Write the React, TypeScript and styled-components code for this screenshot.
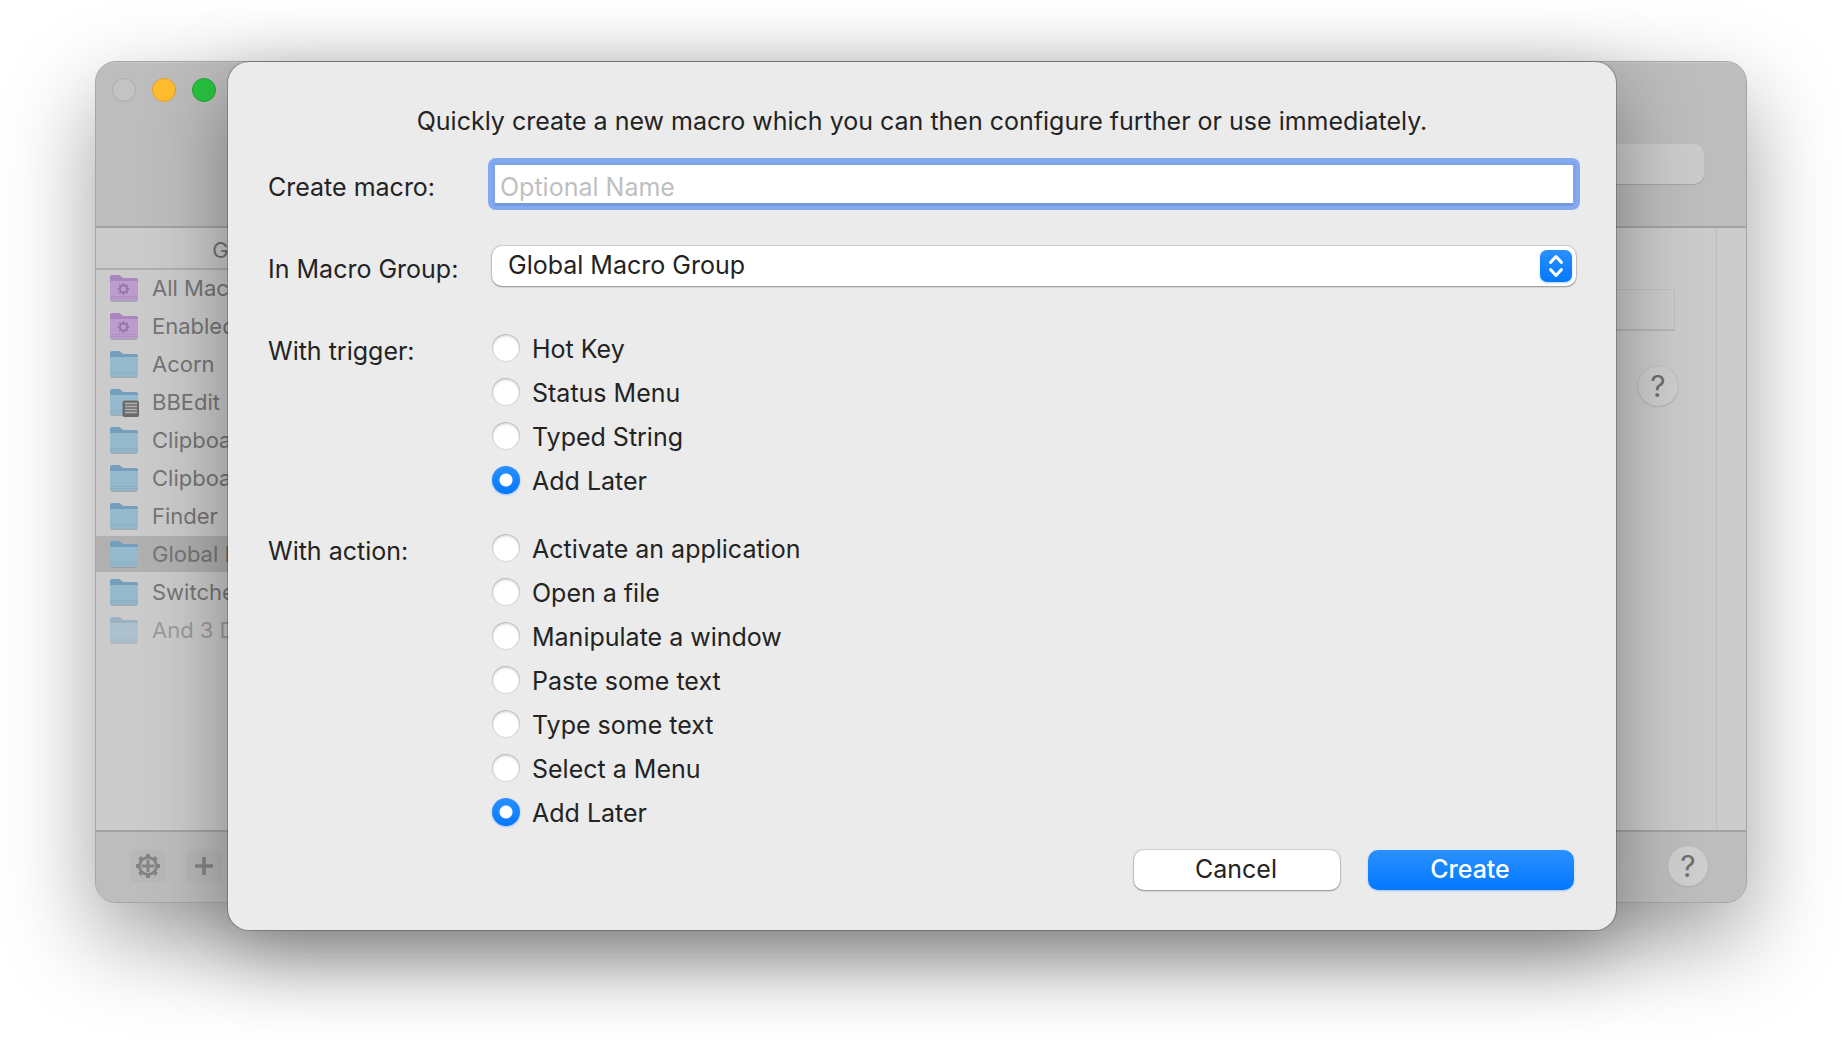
import React, { useState } from "react";
import styled, { createGlobalStyle } from "styled-components";

const GlobalStyle = createGlobalStyle`
  * { box-sizing: border-box; }
  html { background: #fff; }
  body {
    margin: 0;
    font-family: Inter, "Liberation Sans", sans-serif;
    color: #232323;
  }
  button, input, select { font: inherit; color: inherit; margin: 0; }
`;

const Stage = styled.main`
  display: grid;
  align-content: start;
  min-height: 100vh;
  padding: 61px 95px;
  overflow: hidden;
`;

const AppWindow = styled.section`
  grid-area: 1 / 1;
  display: flex;
  flex-direction: column;
  margin-bottom: 27px;
  border: 1px solid #a6a6a6;
  border-radius: 21px;
  background: #cbcbcb;
  overflow: hidden;
  box-shadow: 0 36px 90px rgba(0, 0, 0, 0.38);
`;

const Toolbar = styled.header`
  display: flex;
  justify-content: space-between;
  align-items: flex-start;
  height: 166px;
  padding: 16px 42px 0 16px;
  border-bottom: 2px solid #a3a3a3;
  background: #bdbdbd;
  box-shadow: inset 0 1px #c9c9c9;
`;

const Lights = styled.div`
  display: flex;
  gap: 16px;
`;

const Light = styled.button<{ $fill: string; $edge: string }>`
  width: 24px;
  height: 24px;
  padding: 0;
  border: 1px solid ${(p) => p.$edge};
  border-radius: 50%;
  background: ${(p) => p.$fill};
`;

const Search = styled.input`
  width: 300px;
  height: 40px;
  margin-top: 66px;
  border: 0;
  border-radius: 10px;
  background: #cbcbcb;
  box-shadow: 0 1px 1px #a2a2a2;
`;

const Body = styled.div`
  display: flex;
  flex: 1;
`;

const Sidebar = styled.nav`
  width: 308px;
`;

const SidebarTitle = styled.h2`
  margin: 0;
  height: 42px;
  border-bottom: 2px solid #b0b0b0;
  font-size: 22px;
  line-height: 44px;
  font-weight: 400;
  text-align: center;
  color: #737373;
`;

const GroupList = styled.ul`
  display: grid;
  gap: 2px;
  margin: 0;
  padding: 0;
  list-style: none;
`;

const GroupRow = styled.li<{ $selected?: boolean; $faded?: boolean }>`
  display: flex;
  align-items: center;
  gap: 13px;
  height: 36px;
  padding-left: 14px;
  background: ${(p) => (p.$selected ? "#b0b0b0" : "transparent")};
  font-size: 22px;
  white-space: nowrap;
  color: #757575;
  > * { opacity: ${(p) => (p.$faded ? 0.55 : 1)}; }
`;

const Editor = styled.div`
  display: flex;
  flex-direction: column;
  align-items: flex-end;
  flex: 1;
  padding: 61px 38px 0 0;
  gap: 35px;
`;

const NameField = styled.input`
  width: 300px;
  height: 42px;
  margin-right: 3px;
  border: 1px solid #bfbfbf;
  border-bottom: 2px solid #b6b6b6;
  background: transparent;
`;

const Gutter = styled.aside`
  width: 30px;
  border-left: 1px solid #bebebe;
`;

const Footer = styled.footer`
  display: flex;
  align-items: center;
  gap: 20px;
  height: 72px;
  padding: 0 38px 2px 34px;
  border-top: 2px solid #a3a3a3;
  background: #bdbdbd;
`;

const ToolButton = styled.button`
  display: grid;
  place-items: center;
  width: 36px;
  height: 34px;
  padding: 0;
  border: 0;
  border-radius: 8px;
  background: #b8b8b8;
  color: #858585;
`;

const HelpButton = styled.button<{ $push?: boolean }>`
  width: 40px;
  height: 40px;
  margin-left: ${(p) => (p.$push ? "auto" : "0")};
  padding: 0;
  border: 0;
  border-radius: 50%;
  background: #cecece;
  box-shadow: 0 0 1px #a8a8a8, 0 1px 2px #b0b0b0;
  font-size: 30px;
  line-height: 40px;
  color: #6e6e6e;
`;

const Sheet = styled.form`
  grid-area: 1 / 1;
  align-self: start;
  position: relative;
  margin: 1px 131px 0 133px;
  padding: 43px 40px 40px;
  border-radius: 21px;
  background: #ebebeb;
  box-shadow: 0 0 0 1px rgba(0, 0, 0, 0.22), 0 24px 80px rgba(0, 0, 0, 0.36);
  font-size: 25px;
  line-height: 32px;
`;

const Intro = styled.p`
  margin: 0 0 25px;
  text-align: center;
`;

const Field = styled.div`
  display: grid;
  grid-template-columns: 224px 1fr;
  align-items: center;
  margin-bottom: 38px;
`;

const FieldLabel = styled.label`
  height: 44px;
  padding-top: 6px;
  line-height: 38px;
`;

const NameInput = styled.input`
  width: 100%;
  height: 44px;
  padding: 5px 5px 0;
  border: 3px solid #7fa4ee;
  border-bottom-color: #7399e2;
  border-radius: 4px;
  outline: none;
  background: #fff;
  box-shadow: 0 0 0 4px #84a9f3;
  &::placeholder { color: #bfbfbf; opacity: 1; }
`;

const SelectBox = styled.div`
  position: relative;
`;

const GroupSelect = styled.select`
  display: block;
  width: 100%;
  height: 40px;
  padding: 0 60px 2px 16px;
  border: 0;
  border-radius: 10px;
  appearance: none;
  background: #fff;
  box-shadow: 0 0 1px 1px rgba(0, 0, 0, 0.12), 0 1px 2px rgba(0, 0, 0, 0.3);
`;

const Stepper = styled.span`
  position: absolute;
  top: 4px;
  right: 4px;
  display: grid;
  width: 32px;
  height: 32px;
  border-radius: 7px;
  background: linear-gradient(#2a90ff, #0378ff);
  box-shadow: 0 1px 2px rgba(0, 110, 255, 0.3);
  pointer-events: none;
`;

const Choices = styled.fieldset<{ $gap: number }>`
  display: grid;
  grid-template-columns: 224px 1fr;
  margin: 0 0 ${(p) => p.$gap}px;
  padding: 0;
  border: 0;
`;

const ChoicesLegend = styled.legend`
  float: left;
  height: 44px;
  padding: 6px 0 0;
  line-height: 38px;
`;

const Options = styled.div`
  display: grid;
  justify-items: start;
`;

const Option = styled.label`
  display: flex;
  align-items: center;
  gap: 12px;
  height: 44px;
`;

const OptionText = styled.span`
  padding-top: 2px;
`;

const Radio = styled.input`
  width: 28px;
  height: 28px;
  border-radius: 50%;
  appearance: none;
  background: #fff;
  box-shadow: inset 0 0 1px 1px rgba(0, 0, 0, 0.16), inset 0 2px 3px rgba(0, 0, 0, 0.16);
  &:checked {
    background: radial-gradient(circle, #fff 0 6px, transparent 7px),
      linear-gradient(#2a90ff, #0378ff);
    box-shadow: 0 1px 2px rgba(0, 110, 255, 0.35);
  }
`;

const Actions = styled.div`
  display: flex;
  justify-content: flex-end;
  gap: 28px;
  padding-right: 2px;
`;

const PushButton = styled.button<{ $primary?: boolean }>`
  width: 206px;
  height: 40px;
  padding: 0 2px 2px 0;
  border: 0;
  border-radius: 10px;
  background: ${(p) => (p.$primary ? "linear-gradient(#2a90ff, #0378ff)" : "#fff")};
  color: ${(p) => (p.$primary ? "#fff" : "#232323")};
  font-weight: ${(p) => (p.$primary ? 500 : 400)};
  box-shadow: ${(p) =>
    p.$primary
      ? "0 1px 2px rgba(0, 110, 255, 0.3)"
      : "0 0 1px 1px rgba(0, 0, 0, 0.12), 0 1px 2px rgba(0, 0, 0, 0.3)"};
`;

type FolderKind = "smart" | "plain" | "app";

function FolderIcon({ kind }: { kind: FolderKind }) {
  const smart = kind === "smart";
  const back = smart ? "#a986bb" : "#769fbe";
  const front = smart ? "#bc9bcd" : "#95b9cd";
  const line = smart ? "#aa8abd" : "#86a9bd";
  return (
    <svg width="29" height="29" viewBox="0 0 29 29" aria-hidden="true">
      <path d="M0 3Q0 1 2 1H8.500Q10 1 11 2.200Q12.500 4 14 4H26.500Q28 4 28 5.500V12H0Z" fill={back} />
      <path d="M0 7H28V25.500Q28 27 26.500 27H1.500Q0 27 0 25.500Z" fill={front} />
      <path d="M0 22.500H28M0 24.500H28" stroke={line} strokeWidth="0.7" />
      <path d="M1 27.300H27" stroke="#8e9599" strokeWidth="0.8" />
      {smart && (
        <g stroke="#9873ae" fill="none">
          <circle cx="13.500" cy="15" r="3.600" strokeWidth="1.800" />
          <g strokeWidth="1.700">
            <path d="M13.500 9V11.300M13.500 18.700V21M7.500 15H9.800M17.200 15H19.500" />
            <path d="M9.300 10.800L10.900 12.400M16.100 17.600L17.700 19.200M17.700 10.800L16.100 12.400M10.900 17.600L9.300 19.200" />
          </g>
        </g>
      )}
      {kind === "app" && (
        <g>
          <rect x="12.500" y="12.500" width="16.500" height="16.500" rx="2" fill="#6a6a6a" />
          <path d="M15 15.500H27M15 18.500H27M15 21.500H27M15 24.500H27" stroke="#b2b2b2" strokeWidth="1.500" />
        </g>
      )}
    </svg>
  );
}

const groups: { name: string; kind: FolderKind; selected?: boolean; faded?: boolean }[] = [
  { name: "All Macros", kind: "smart" },
  { name: "Enabled", kind: "smart" },
  { name: "Acorn", kind: "plain" },
  { name: "BBEdit", kind: "app" },
  { name: "Clipboard", kind: "plain" },
  { name: "Clipboard", kind: "plain" },
  { name: "Finder", kind: "plain" },
  { name: "Global M", kind: "plain", selected: true },
  { name: "Switcher", kind: "plain" },
  { name: "And 3 Dis", kind: "plain", faded: true },
];

const triggers = ["Hot Key", "Status Menu", "Typed String", "Add Later"];
const actions = [
  "Activate an application",
  "Open a file",
  "Manipulate a window",
  "Paste some text",
  "Type some text",
  "Select a Menu",
  "Add Later",
];

function RadioGroup(props: { legend: string; name: string; options: string[]; gap: number }) {
  const [value, setValue] = useState("Add Later");
  return (
    <Choices $gap={props.gap}>
      <ChoicesLegend>{props.legend}</ChoicesLegend>
      <Options>
        {props.options.map((option) => (
          <Option key={option}>
            <Radio
              type="radio"
              name={props.name}
              checked={value === option}
              onChange={() => setValue(option)}
            />
            <OptionText>{option}</OptionText>
          </Option>
        ))}
      </Options>
    </Choices>
  );
}

export default function App() {
  return (
    <>
      <GlobalStyle />
      <Stage>
        <AppWindow>
          <Toolbar>
            <Lights>
              <Light type="button" aria-label="Close" $fill="#c3c3c3" $edge="#acacac" />
              <Light type="button" aria-label="Minimize" $fill="#ffbd2e" $edge="#e0a028" />
              <Light type="button" aria-label="Zoom" $fill="#28c540" $edge="#22a935" />
            </Lights>
            <Search type="search" aria-label="Search" />
          </Toolbar>
          <Body>
            <Sidebar>
              <SidebarTitle>Groups</SidebarTitle>
              <GroupList>
                {groups.map((group, index) => (
                  <GroupRow key={index} $selected={group.selected} $faded={group.faded}>
                    <FolderIcon kind={group.kind} />
                    <span>{group.name}</span>
                  </GroupRow>
                ))}
              </GroupList>
            </Sidebar>
            <Editor>
              <NameField type="text" aria-label="Group name" />
              <HelpButton type="button">?</HelpButton>
            </Editor>
            <Gutter />
          </Body>
          <Footer>
            <ToolButton type="button" aria-label="Options">
              <svg width="26" height="26" viewBox="0 0 26 26" fill="none" stroke="currentColor">
                <circle cx="13" cy="13" r="8.500" strokeWidth="3" />
                <path d="M13 7V19M7 13H19" strokeWidth="3" />
                <path
                  d="M13 1V4M13 22V25M1 13H4M22 13H25M4.500 4.500L6.600 6.600M19.400 19.400L21.500 21.500M21.500 4.500L19.400 6.600M6.600 19.400L4.500 21.500"
                  strokeWidth="4"
                />
              </svg>
            </ToolButton>
            <ToolButton type="button" aria-label="Add">
              <svg width="20" height="20" viewBox="0 0 20 20" stroke="currentColor">
                <path d="M10 1V19M1 10H19" strokeWidth="3.600" />
              </svg>
            </ToolButton>
            <HelpButton type="button" $push>
              ?
            </HelpButton>
          </Footer>
        </AppWindow>

        <Sheet onSubmit={(event) => event.preventDefault()}>
          <Intro>Quickly create a new macro which you can then configure further or use immediately.</Intro>
          <Field>
            <FieldLabel htmlFor="macro-name">Create macro:</FieldLabel>
            <NameInput id="macro-name" type="text" placeholder="Optional Name" />
          </Field>
          <Field>
            <FieldLabel htmlFor="macro-group">In Macro Group:</FieldLabel>
            <SelectBox>
              <GroupSelect id="macro-group">
                <option>Global Macro Group</option>
              </GroupSelect>
              <Stepper>
                <svg width="32" height="32" viewBox="0 0 32 32" fill="none" stroke="#fff" strokeWidth="3" strokeLinecap="round" strokeLinejoin="round">
                  <path d="M10.500 12.500L16 6.500L21.500 12.500M10.500 19.500L16 25.500L21.500 19.500" />
                </svg>
              </Stepper>
            </SelectBox>
          </Field>
          <RadioGroup legend="With trigger:" name="trigger" options={triggers} gap={24} />
          <RadioGroup legend="With action:" name="action" options={actions} gap={16} />
          <Actions>
            <PushButton type="button">Cancel</PushButton>
            <PushButton type="submit" $primary>
              Create
            </PushButton>
          </Actions>
        </Sheet>
      </Stage>
    </>
  );
}
